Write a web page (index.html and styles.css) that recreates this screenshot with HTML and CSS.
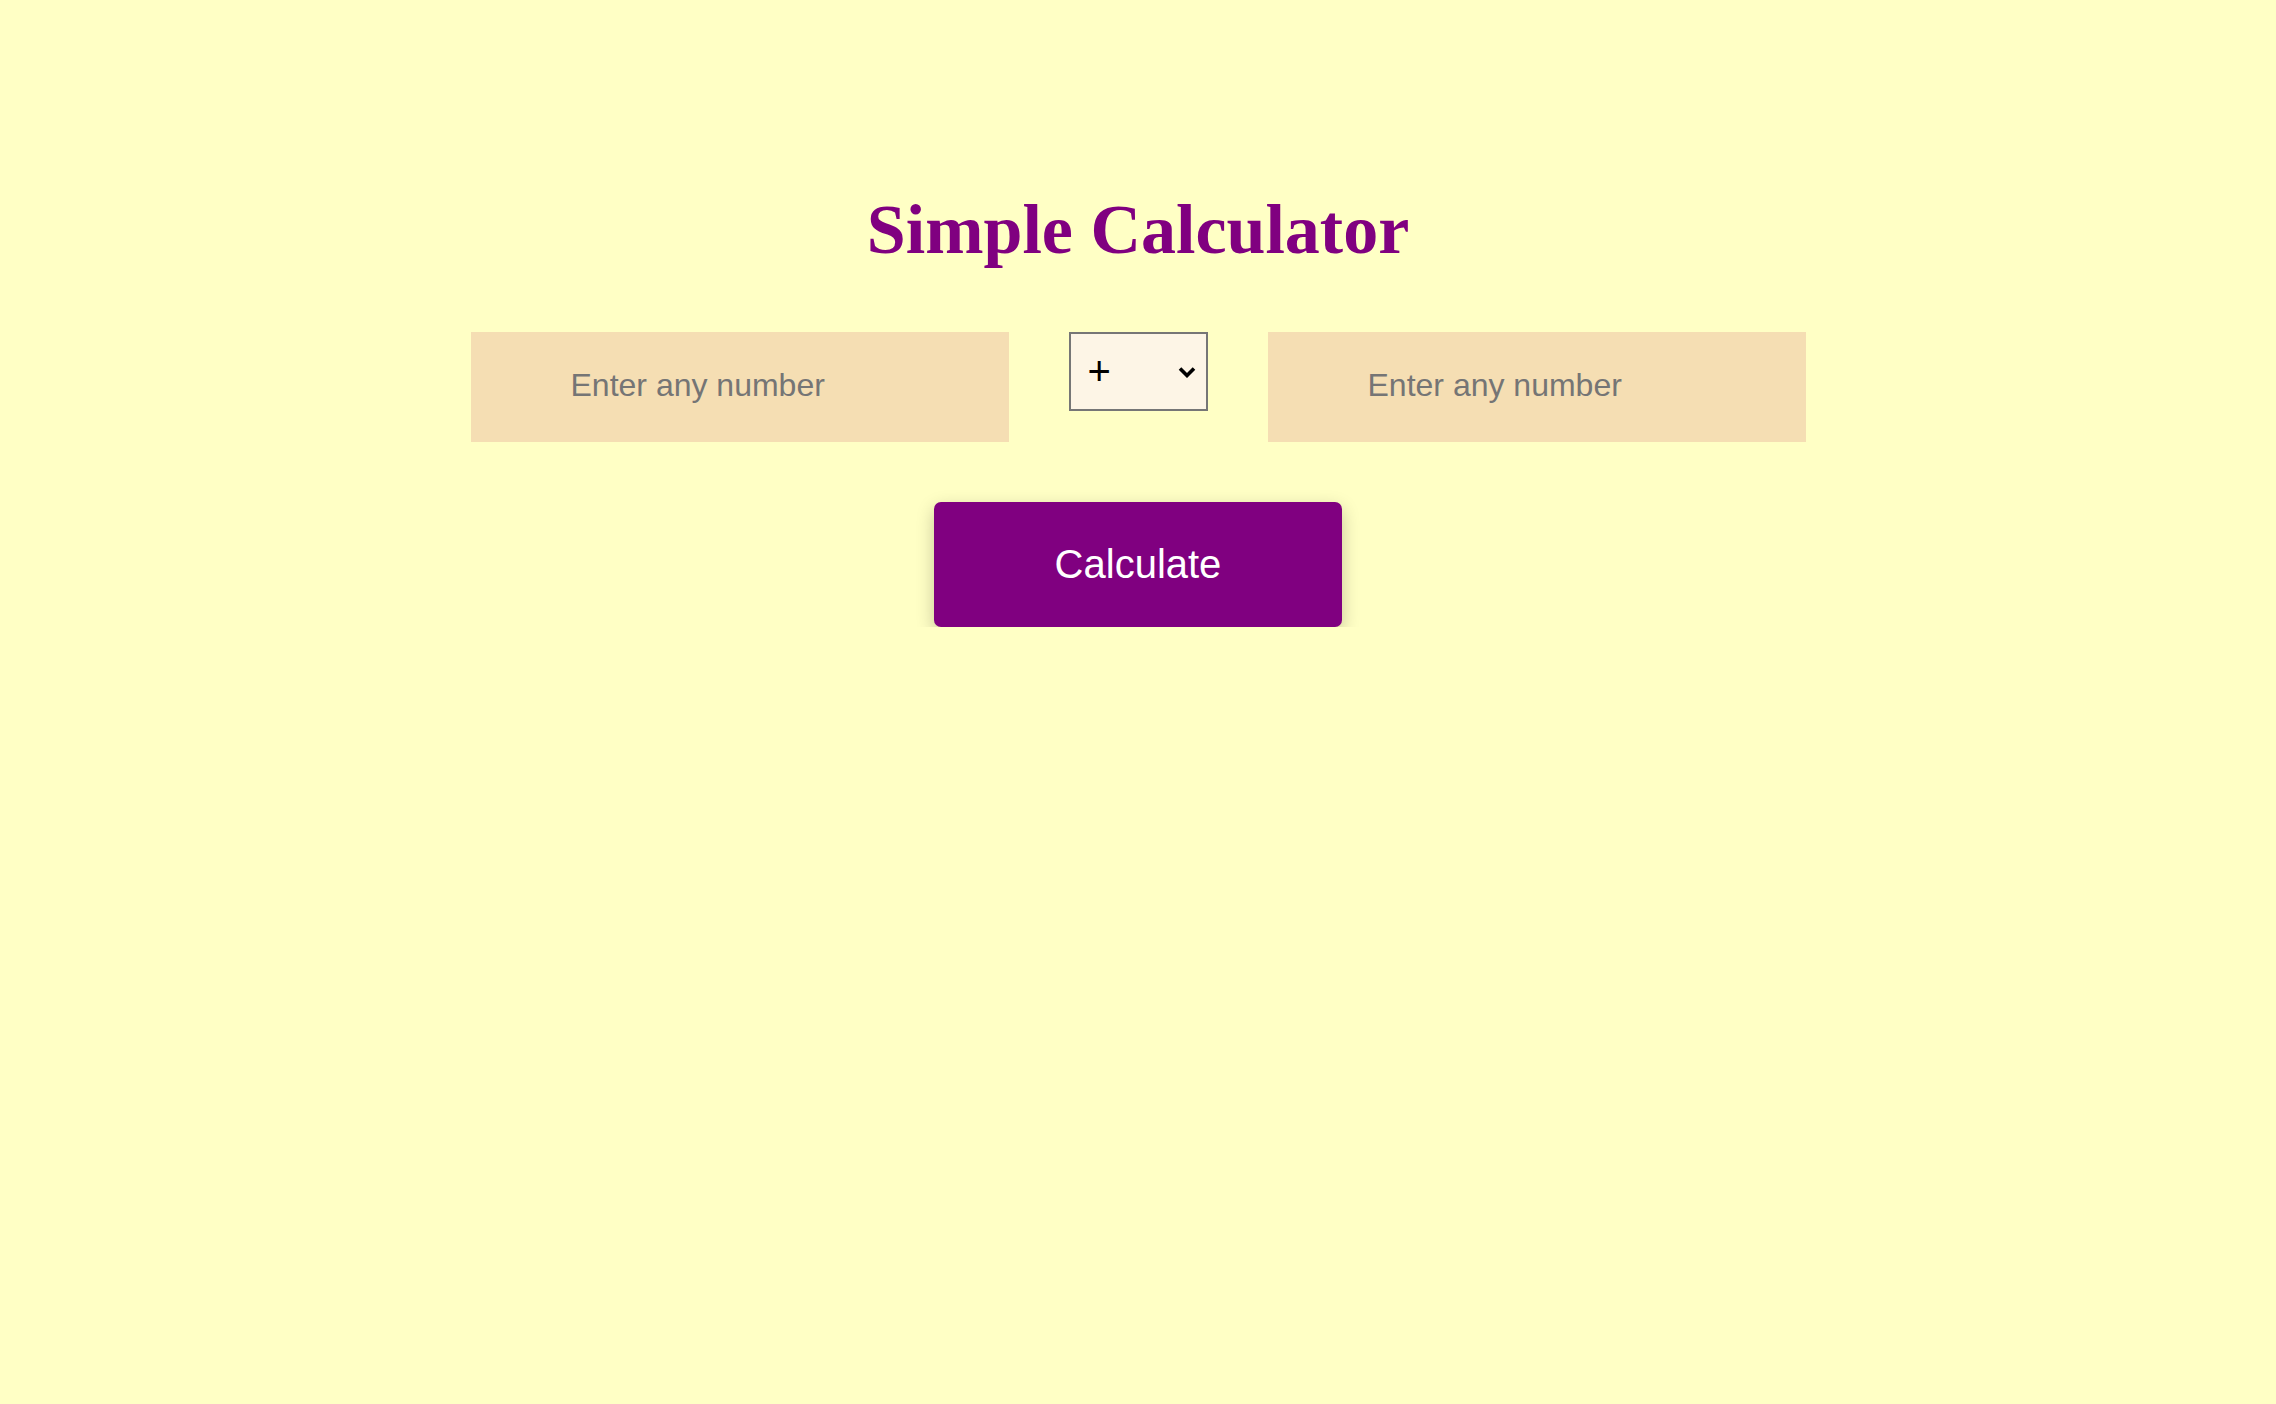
FILE: index.html
```html
<!DOCTYPE html>
<html lang="en">
<head>
<meta charset="utf-8">
<title>Simple Calculator</title>
<link rel="stylesheet" href="styles.css">
</head>
<body>
<main class="calc">
  <h1 class="calc-title">Simple Calculator</h1>
  <div class="calc-row">
    <input class="calc-input" type="number" placeholder="Enter any number">
    <select class="calc-op">
      <option>+</option>
      <option>-</option>
      <option>*</option>
      <option>/</option>
    </select>
    <input class="calc-input" type="number" placeholder="Enter any number">
  </div>
  <button class="calc-btn" type="button">Calculate</button>
</main>
</body>
</html>
```

FILE: styles.css
```css
html, body {
  margin: 0;
  padding: 0;
  background: #ffffc5;
}

.calc {
  display: flex;
  flex-direction: column;
  align-items: center;
  padding-top: 190px;
}

.calc-title {
  margin: 0;
  font-family: "Liberation Serif", "Times New Roman", serif;
  font-weight: 700;
  font-size: 70px;
  line-height: 80px;
  color: #800080;
}

.calc-row {
  display: flex;
  align-items: flex-start;
  gap: 60px;
  margin-top: 62px;
}

.calc-input {
  box-sizing: border-box;
  width: 538px;
  height: 110px;
  border: none;
  outline: none;
  background: #f5deb3;
  padding: 0 0 4px 100px;
  font-family: "Liberation Sans", Arial, sans-serif;
  font-size: 32px;
  color: #000;
  -moz-appearance: textfield;
}

.calc-input::-webkit-outer-spin-button,
.calc-input::-webkit-inner-spin-button {
  -webkit-appearance: none;
  margin: 0;
}

.calc-input::placeholder {
  color: #757575;
}

.calc-op {
  box-sizing: border-box;
  width: 139px;
  height: 79px;
  border: 2px solid #767676;
  border-radius: 0;
  background-color: #fdf5e6;
  background-image: url("data:image/svg+xml,%3Csvg xmlns='http://www.w3.org/2000/svg' width='18' height='12' viewBox='0 0 18 12'%3E%3Cpath d='M2 2.5 L9 9.5 L16 2.5' fill='none' stroke='%23000' stroke-width='3.6'/%3E%3C/svg%3E");
  background-repeat: no-repeat;
  background-position: right 10px center;
  -webkit-appearance: none;
  appearance: none;
  padding: 0 0 2px 17px;
  font-family: "Liberation Sans", Arial, sans-serif;
  font-weight: 400;
  font-size: 40px;
  color: #000;
}

.calc-btn {
  margin-top: 60px;
  width: 408px;
  height: 125px;
  border: none;
  border-radius: 7px;
  background: #800080;
  color: #fff;
  font-family: "Liberation Sans", Arial, sans-serif;
  font-size: 40px;
  box-shadow: 0 6px 18px rgba(0, 0, 0, 0.22);
  cursor: pointer;
}
```
